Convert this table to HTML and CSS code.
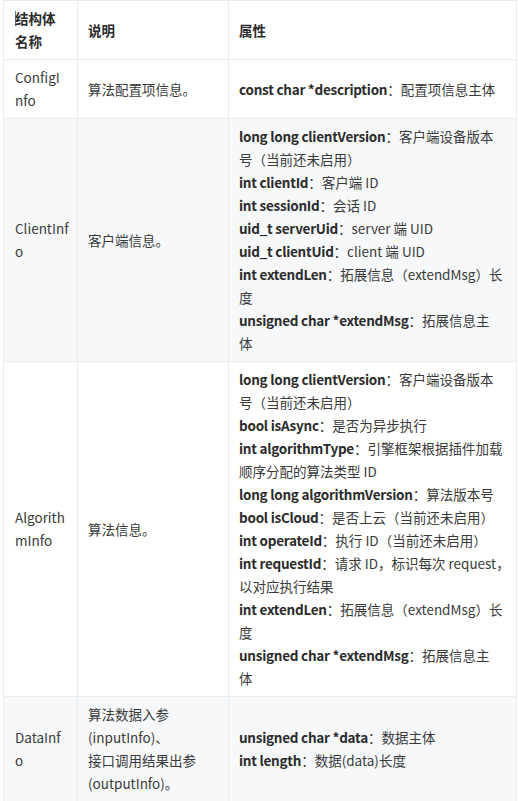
FILE: index.html
```html
<!DOCTYPE html>
<html lang="zh-CN">
<head>
<meta charset="utf-8">
<title>结构体说明</title>
<link rel="stylesheet" href="styles.css">
</head>
<body>
<table class="spec">
  <colgroup>
    <col class="c-name">
    <col class="c-desc">
    <col class="c-attr">
  </colgroup>
  <thead>
    <tr>
      <th class="name"><span class="caret"></span>结构体<br>名称</th>
      <th>说明</th>
      <th>属性</th>
    </tr>
  </thead>
  <tbody>
    <tr>
      <td class="name">ConfigI<br>nfo</td>
      <td>算法配置项信息。</td>
      <td class="attrs"><div><b>const char *description</b>：配置项信息主体</div></td>
    </tr>
    <tr class="alt">
      <td class="name">ClientInf<br>o</td>
      <td>客户端信息。</td>
      <td class="attrs">
        <div><b>long long clientVersion</b>：客户端设备版本<br>号（当前还未启用）</div>
        <div><b>int clientId</b>：客户端 ID</div>
        <div><b>int sessionId</b>：会话 ID</div>
        <div><b>uid_t serverUid</b>：server 端 UID</div>
        <div><b>uid_t clientUid</b>：client 端 UID</div>
        <div><b>int extendLen</b>：拓展信息（extendMsg）长<br>度</div>
        <div><b>unsigned char *extendMsg</b>：拓展信息主<br>体</div>
      </td>
    </tr>
    <tr>
      <td class="name">Algorith<br>mInfo</td>
      <td>算法信息。</td>
      <td class="attrs">
        <div><b>long long clientVersion</b>：客户端设备版本<br>号（当前还未启用）</div>
        <div><b>bool isAsync</b>：是否为异步执行</div>
        <div><b>int algorithmType</b>：引擎框架根据插件加载<br>顺序分配的算法类型 ID</div>
        <div><b>long long algorithmVersion</b>：算法版本号</div>
        <div><b>bool isCloud</b>：是否上云（当前还未启用）</div>
        <div><b>int operateId</b>：执行 ID（当前还未启用）</div>
        <div><b>int requestId</b>：请求 ID，标识每次 request，<br>以对应执行结果</div>
        <div><b>int extendLen</b>：拓展信息（extendMsg）长<br>度</div>
        <div><b>unsigned char *extendMsg</b>：拓展信息主<br>体</div>
      </td>
    </tr>
    <tr class="alt">
      <td class="name">DataInf<br>o</td>
      <td>算法数据入参<br>(inputInfo)、<br>接口调用结果出参<br>(outputInfo)。</td>
      <td class="attrs">
        <div><b>unsigned char *data</b>：数据主体</div>
        <div><b>int length</b>：数据(data)长度</div>
      </td>
    </tr>
  </tbody>
</table>
</body>
</html>
```
FILE: styles.css
```css
html, body {
  margin: 0;
  padding: 0;
  background: #ffffff;
}

body {
  font-family: "Noto Sans CJK SC", "Noto Sans", sans-serif;
  font-size: 13.5px;
  line-height: 23px;
  color: #3a3a3a;
}

.spec {
  border-collapse: collapse;
  table-layout: fixed;
  width: 513px;
  margin: 0 0 0 3px;
}

.c-name { width: 74px; }
.c-desc { width: 151px; }
.c-attr { width: 288px; }

.spec th,
.spec td {
  border: 1px solid #e9ecef;
  padding: 6px 10px;
  text-align: left;
  vertical-align: middle;
  word-break: normal;
  overflow-wrap: break-word;
}

.spec .name {
  padding-left: 11px;
  padding-right: 6px;
}

.spec .attrs div {
  white-space: nowrap;
}

.spec th {
  font-weight: 700;
  color: #2b2b2b;
}

.spec b {
  font-weight: 700;
  color: #2b2b2b;
  letter-spacing: -0.25px;
}

.spec tr.alt td {
  background: #f6f8fa;
}

.caret {
  display: inline-block;
  width: 1px;
  height: 15px;
  margin-right: -1px;
  vertical-align: -2px;
  background: #5a78b8;
}
```
